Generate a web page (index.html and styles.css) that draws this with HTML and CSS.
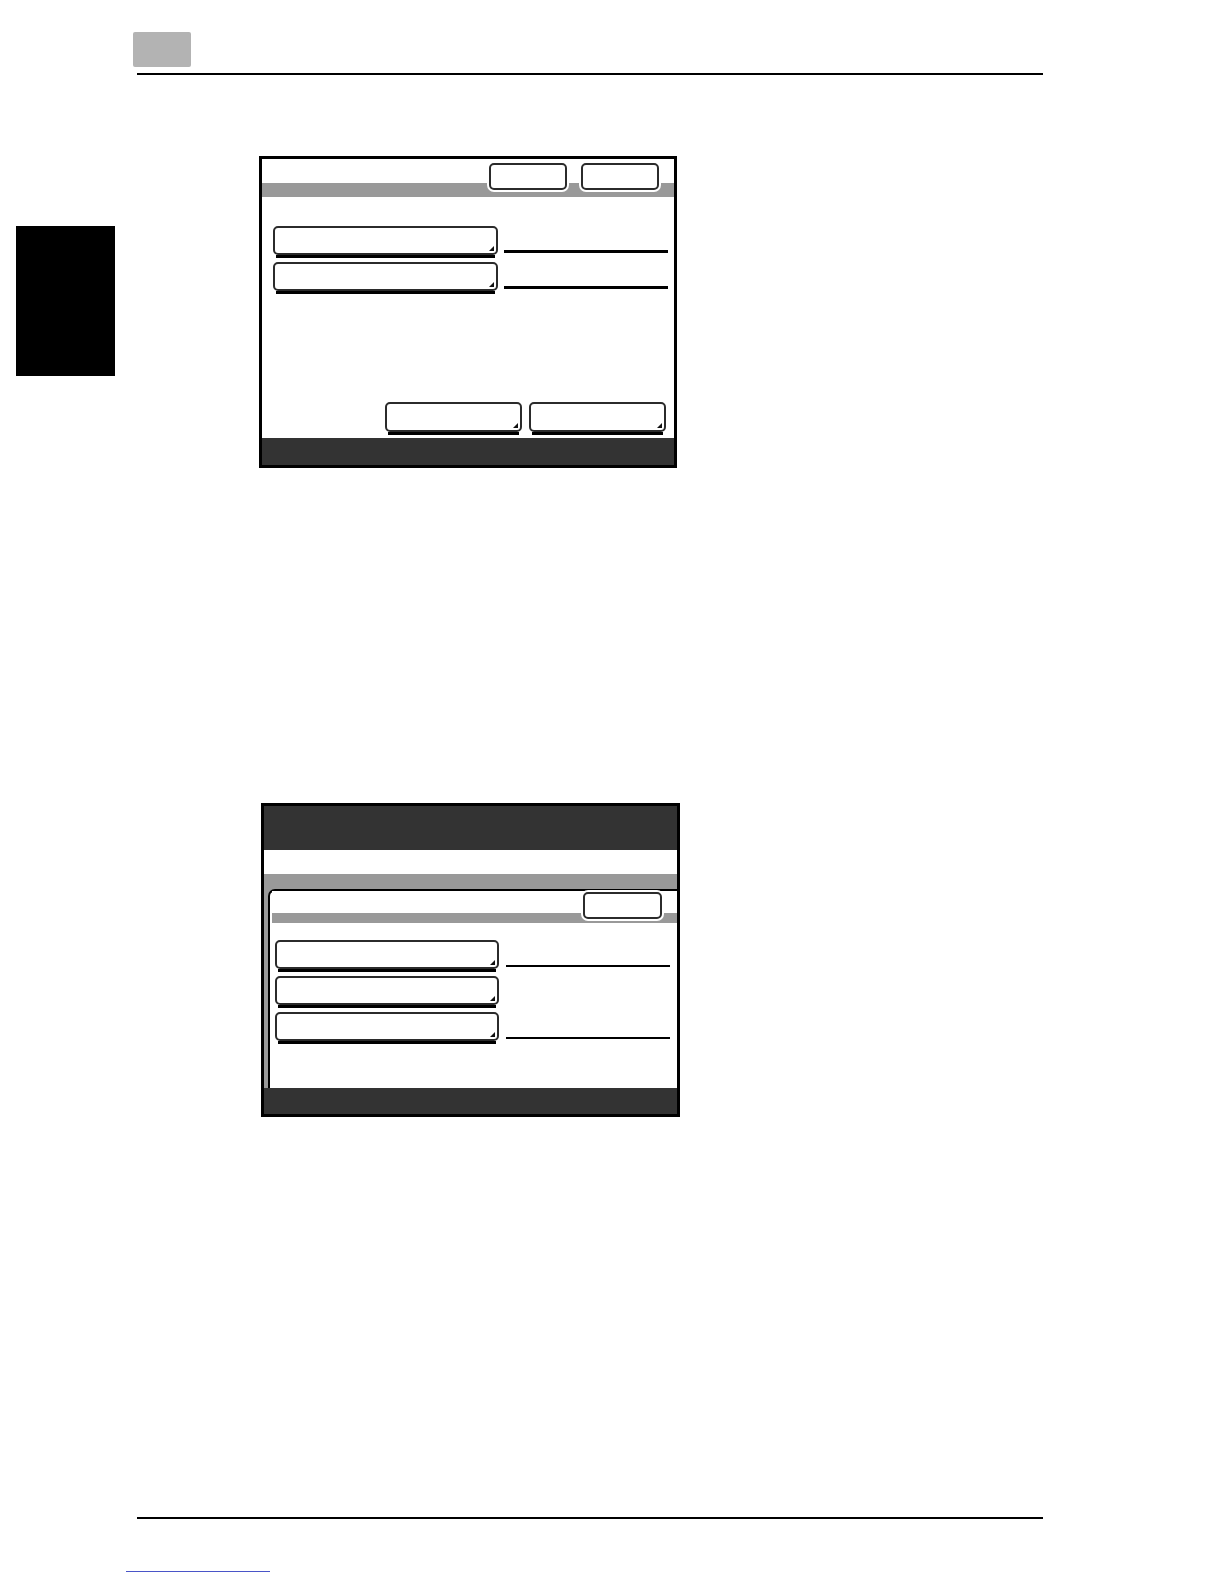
FILE: index.html
```html
<!DOCTYPE html>
<html lang="en">
<head>
<meta charset="utf-8">
<title>Screen figures</title>
<link rel="stylesheet" href="styles.css">
</head>
<body>
<div class="page">
  <header class="top">
    <div class="chapter-tab"></div>
    <div class="rule"></div>
  </header>
  <div class="content">
    <aside class="thumb"></aside>
    <main class="figures">
      <section class="screen s1">
        <div class="s1-head">
          <div class="btn small"></div>
          <div class="btn small"></div>
        </div>
        <div class="rows s1-rows">
          <div class="row">
            <div class="btn key"></div>
            <div class="line thick"></div>
          </div>
          <div class="row">
            <div class="btn key"></div>
            <div class="line thick"></div>
          </div>
        </div>
        <div class="s1-actions">
          <div class="btn key wide"></div>
          <div class="btn key wide"></div>
        </div>
        <div class="footer f1"></div>
      </section>

      <section class="screen s2">
        <div class="s2-title"></div>
        <div class="s2-gap"></div>
        <div class="s2-body">
          <div class="panel">
            <div class="panel-head">
              <div class="btn small s2btn"></div>
            </div>
            <div class="rows s2-rows">
              <div class="row">
                <div class="btn key k2"></div>
                <div class="line thin"></div>
              </div>
              <div class="row">
                <div class="btn key k2"></div>
              </div>
              <div class="row">
                <div class="btn key k2"></div>
                <div class="line thin"></div>
              </div>
            </div>
          </div>
        </div>
        <div class="footer f2"></div>
      </section>
    </main>
  </div>
  <div class="rule bottom-rule"></div>
  <div class="link-line"></div>
</div>
</body>
</html>
```

FILE: styles.css
```css
* { box-sizing: border-box; }

html, body {
  margin: 0;
  padding: 0;
  background: #fff;
  font-family: "Liberation Sans", Arial, sans-serif;
}

.page {
  width: 1224px;
  height: 1584px;
  overflow: hidden;
}

.top {
  display: flex;
  flex-direction: column;
}

.chapter-tab {
  margin: 32px 0 0 133px;
  width: 58px;
  height: 35px;
  background: #b3b3b3;
  border-radius: 2px;
}

.rule {
  margin-left: 137px;
  width: 906px;
  height: 2px;
  background: #000;
}

.top .rule { margin-top: 6px; }

.content {
  display: flex;
  align-items: flex-start;
}

.thumb {
  margin: 151px 0 0 16px;
  width: 99px;
  height: 150px;
  background: #000;
  flex: none;
}

.figures {
  margin-left: 144px;
  display: flex;
  flex-direction: column;
}

.screen {
  border: 3px solid #000;
  display: flex;
  flex-direction: column;
  background: #fff;
}

/* ---------- buttons ---------- */
.btn {
  position: relative;
  background: #fff;
  border: 2px solid #2b2b2b;
  border-radius: 5px;
  box-shadow: 0 0 0 2px #fff;
  flex: none;
}

.btn.small {
  width: 78px;
  height: 27px;
}

.btn.key {
  width: 225px;
  height: 29px;
  box-shadow: none;
}

.btn.key::after {
  content: "";
  position: absolute;
  left: 1px;
  right: 1px;
  bottom: -5px;
  height: 3px;
  background: #000;
}

.btn.key::before {
  content: "";
  position: absolute;
  right: 2px;
  bottom: 2px;
  width: 0;
  height: 0;
  border-left: 5px solid transparent;
  border-bottom: 5px solid #111;
}

.btn.key.wide {
  width: 137px;
  height: 30px;
}

.btn.key.k2 { width: 224px; }

.row {
  display: flex;
  align-items: flex-end;
}

.line {
  width: 164px;
  background: #000;
}

.line.thick {
  height: 3px;
  margin: 0 0 2px 6px;
}

.line.thin {
  height: 2px;
  margin: 0 0 2px 7px;
}

.rows {
  display: flex;
  flex-direction: column;
  gap: 7px;
}

/* ---------- screen 1 ---------- */
.s1 {
  width: 418px;
  height: 312px;
  margin-top: 81px;
}

.s1-head {
  height: 38px;
  background: linear-gradient(to bottom, #fff 0, #fff 24px, #999 24px, #999 100%);
  display: flex;
  justify-content: flex-end;
  align-items: flex-start;
  gap: 14px;
  padding: 4px 15px 0 0;
}

.s1-rows {
  padding: 29px 0 0 11px;
}

.s1-actions {
  margin-top: auto;
  margin-bottom: 6px;
  display: flex;
  justify-content: flex-end;
  gap: 7px;
  padding-right: 8px;
}

.footer {
  background: #333;
  flex: none;
}

.f1 { height: 27px; }

/* ---------- screen 2 ---------- */
.s2 {
  width: 419px;
  height: 314px;
  margin: 335px 0 0 2px;
}

.s2-title {
  height: 44px;
  background: #333;
  flex: none;
}

.s2-gap {
  height: 24px;
  flex: none;
}

.s2-body {
  flex: 1;
  background: #999;
  padding: 15px 0 0 4px;
  display: flex;
  flex-direction: column;
}

.panel {
  flex: 1;
  background: #fff;
  border-top: 2px solid #000;
  border-left: 2px solid #000;
  border-top-left-radius: 7px;
}

.panel-head {
  margin-left: 2px;
  height: 32px;
  background: linear-gradient(to bottom, #fff 0, #fff 22px, #999 22px, #999 100%);
  display: flex;
  justify-content: flex-end;
  align-items: flex-start;
  padding: 1px 15px 0 0;
}

.btn.s2btn { width: 79px; }

.s2-rows {
  padding: 17px 0 0 5px;
}

.f2 { height: 26px; }

/* ---------- page foot ---------- */
.bottom-rule {
  margin-top: 400px;
}

.link-line {
  margin: 52px 0 0 126px;
  width: 144px;
  height: 1px;
  background: #4a55c8;
}
```
